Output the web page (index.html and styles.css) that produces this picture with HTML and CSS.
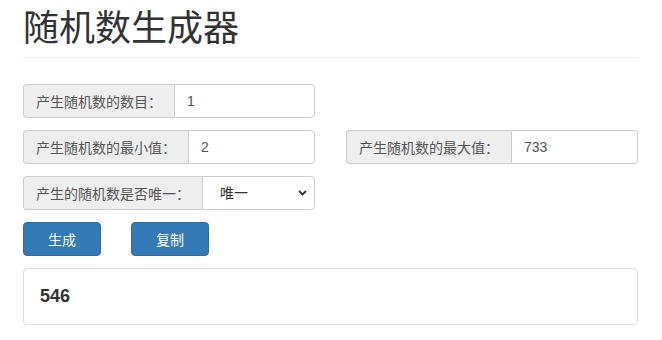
FILE: index.html
```html
<!DOCTYPE html>
<html lang="zh-CN">
<head>
    <meta charset="UTF-8">
    <meta name="viewport" content="width=device-width, initial-scale=1.0">
    <title>随机数生成器</title>
    <link rel="stylesheet" href="styles.css">
</head>
<body>
    <div class="container">
        <div class="page-header">
            <h1>随机数生成器</h1>
        </div>

        <form class="gen-form" onsubmit="return false;">
            <div class="input-group">
                <span class="addon">产生随机数的数目：</span>
                <input class="field" type="text" value="1">
            </div>
            <div class="spacer"></div>

            <div class="input-group">
                <span class="addon">产生随机数的最小值：</span>
                <input class="field" type="text" value="2">
            </div>
            <div class="input-group">
                <span class="addon">产生随机数的最大值：</span>
                <input class="field" type="text" value="733">
            </div>

            <div class="input-group">
                <span class="addon">产生的随机数是否唯一：</span>
                <div class="select-wrap">
                    <select class="field">
                        <option>唯一</option>
                        <option>不唯一</option>
                    </select>
                    <svg class="chevron" width="9" height="6" viewBox="0 0 9 6">
                        <path d="M1 1 L4.5 4.5 L8 1" fill="none" stroke="#333" stroke-width="1.8"/>
                    </svg>
                </div>
            </div>
            <div class="spacer"></div>

            <div class="buttons">
                <button class="btn" type="button">生成</button>
                <button class="btn" type="button">复制</button>
            </div>

            <div class="result">
                <h4>546</h4>
            </div>
        </form>
    </div>
</body>
</html>
```

FILE: styles.css
```css
body {
    margin: 0;
    font-family: "Liberation Sans", "Noto Sans CJK SC", sans-serif;
    font-size: 14px;
    color: #333;
    background: #fff;
}

.container {
    margin: 0 24px 0 23px;
}

.page-header {
    padding-bottom: 8px;
    border-bottom: 1px solid #eee;
    margin-bottom: 26px;
}

.page-header h1 {
    margin: 9px 0 0;
    font-size: 36px;
    line-height: 40px;
    font-weight: 400;
    color: #333;
}

.gen-form {
    display: grid;
    grid-template-columns: minmax(0, 1fr) minmax(0, 1fr);
    gap: 12px 31px;
}

.input-group {
    display: flex;
    height: 34px;
    min-width: 0;
}

.addon {
    display: flex;
    align-items: center;
    padding: 0 12px;
    background: #eee;
    border: 1px solid #ccc;
    border-right: none;
    border-radius: 4px 0 0 4px;
    color: #555;
    white-space: nowrap;
}

.field {
    flex: 1;
    width: 100%;
    min-width: 0;
    height: 34px;
    box-sizing: border-box;
    padding: 6px 12px;
    border: 1px solid #ccc;
    border-radius: 0 4px 4px 0;
    font-family: inherit;
    font-size: 14px;
    color: #555;
    background: #fff;
    outline: none;
}

.select-wrap {
    flex: 1;
    min-width: 0;
    display: flex;
    position: relative;
}

.select-wrap select {
    appearance: none;
    -webkit-appearance: none;
    padding-left: 17px;
    color: #333;
}

.chevron {
    position: absolute;
    right: 8px;
    top: 14px;
}

.buttons {
    grid-column: 1 / -1;
    display: flex;
    gap: 30px;
}

.btn {
    width: 78px;
    height: 34px;
    background: #337ab7;
    border: 1px solid #2e6da4;
    border-radius: 4px;
    color: #fff;
    font-family: inherit;
    font-size: 14px;
    cursor: pointer;
}

.result {
    grid-column: 1 / -1;
    border: 1px solid #ddd;
    border-radius: 4px;
    padding: 15px 16px;
}

.result h4 {
    margin: 0;
    font-size: 18px;
    line-height: 25px;
    font-weight: bold;
}
```
